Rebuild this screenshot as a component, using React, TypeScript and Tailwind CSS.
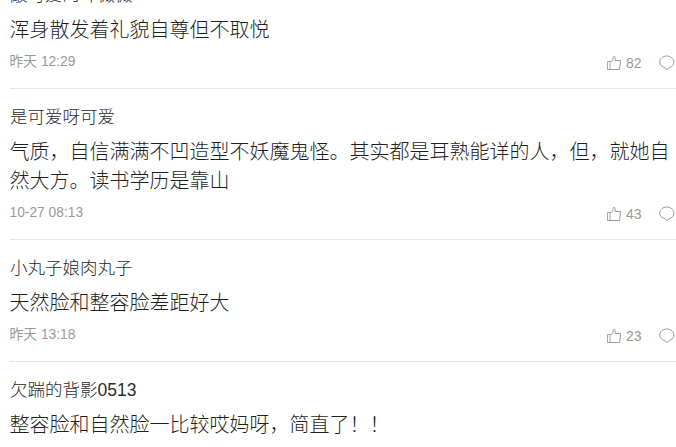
import React from "react";

interface Comment {
  name: string;
  text: string;
  time?: string;
  likes?: number;
}

const comments: Comment[] = [
  { name: "敲可爱的叶薇薇", text: "浑身散发着礼貌自尊但不取悦", time: "昨天 12:29", likes: 82 },
  {
    name: "是可爱呀可爱",
    text: "气质，自信满满不凹造型不妖魔鬼怪。其实都是耳熟能详的人，但，就她自然大方。读书学历是靠山",
    time: "10-27 08:13",
    likes: 43,
  },
  { name: "小丸子娘肉丸子", text: "天然脸和整容脸差距好大", time: "昨天 13:18", likes: 23 },
  { name: "欠踹的背影0513", text: "整容脸和自然脸一比较哎妈呀，简直了！！" },
];

const LikeIcon = () => (
  <svg width="16" height="16" viewBox="0 0 16 16" fill="none" stroke="#999" strokeLinejoin="round">
    <path d="M1.5 6.5H4v8H1.5z" stroke="#8fb0d6" />
    <path d="M4 6.5h1.500C6.700 5.600 7 4 7.100 2.200c.1-1.300 2-1.200 2 .3v3h5.400l-.9 9H1.500" />
  </svg>
);

const ReplyIcon = () => (
  <svg width="16" height="16" viewBox="0 0 16 16" fill="none" stroke="#999" strokeLinejoin="round">
    <path d="M5.800 12.500C2.900 11.900.7 9.800.7 7 .7 3.700 3.900 1 7.800 1s7.100 2.700 7.100 6c0 2.700-1.900 4.900-4.700 5.500L8 14.700z" />
  </svg>
);

const CommentItem = ({ name, text, time, likes }: Comment) => (
  <li className="border-b border-[#e6e6e6] pt-[17px] pb-[13.5px] last:border-b-0">
    <div className="h-[23px] text-[17.5px] leading-[23px] text-[#2b2b2b]">{name}</div>
    <p className="mt-[9px] -mr-px -ml-[0.5px] text-[20px] leading-[28.5px]">{text}</p>
    {time && (
      <div className="mt-[4.5px] flex h-[25.5px] items-center justify-between text-[13.8px] font-normal text-[#999]">
        <span className="-ml-[0.5px] pt-[2px]">{time}</span>
        <div className="flex items-center pt-[3px] pr-px">
          <LikeIcon />
          <span className="ml-1 w-[33px] pt-px text-[14px]">{likes}</span>
          <ReplyIcon />
        </div>
      </div>
    )}
  </li>
);

export default function App() {
  return (
    <main className="h-[447px] overflow-hidden bg-white pl-[10px] font-['Liberation_Sans','Noto_Sans_CJK_SC',sans-serif] font-light text-[#1f1f1f]">
      <ul className="-mt-[33px]">
        {comments.map((comment) => (
          <CommentItem key={comment.name} {...comment} />
        ))}
      </ul>
    </main>
  );
}
